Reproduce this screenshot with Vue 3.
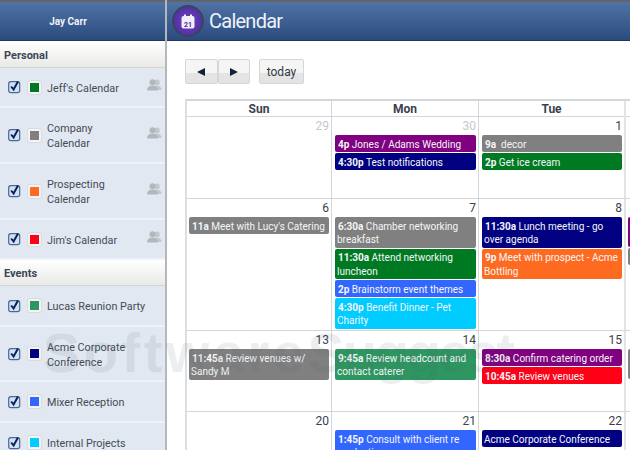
<script setup>
const groups = [
  { name: 'Personal', cls: 'personal', items: [
    { label: "Jeff's Calendar", color: '#007a22', shared: true, cls: 'single' },
    { label: 'Company Calendar', color: '#808080', shared: true, cls: 'double' },
    { label: 'Prospecting Calendar', color: '#ff6a21', shared: true, cls: 'double' },
    { label: "Jim's Calendar", color: '#ff0016', shared: true, cls: 'single' },
  ]},
  { name: 'Events', cls: 'events', items: [
    { label: 'Lucas Reunion Party', color: '#2e9761', cls: 'single' },
    { label: 'Acme Corporate Conference', color: '#000080', cls: 'double' },
    { label: 'Mixer Reception', color: '#3366ff', cls: 'single' },
    { label: 'Internal Projects', color: '#00ccff', cls: 'single' },
  ]},
]
const days = ['Sun', 'Mon', 'Tue', 'Wed']
const weeks = [
  { h: 'w1', cells: [
    { n: 29, muted: true, ev: [] },
    { n: 30, muted: true, ev: [
      { t: '4p', x: 'Jones / Adams Wedding', c: '#800080' },
      { t: '4:30p', x: 'Test notifications', c: '#000080' } ] },
    { n: 1, ev: [
      { t: '9a', x: '\u00a0decor', c: '#808080' },
      { t: '2p', x: 'Get ice cream', c: '#007a22' } ] },
    { n: '', ev: [] },
  ]},
  { h: 'w2', cells: [
    { n: 6, ev: [ { t: '11a', x: "Meet with Lucy's Catering", c: '#808080' } ] },
    { n: 7, ev: [
      { t: '6:30a', x: 'Chamber networking breakfast', c: '#808080' },
      { t: '11:30a', x: 'Attend networking luncheon', c: '#007a22' },
      { t: '2p', x: 'Brainstorm event themes', c: '#3366ff' },
      { t: '4:30p', x: 'Benefit Dinner - Pet Charity', c: '#00ccff' } ] },
    { n: 8, ev: [
      { t: '11:30a', x: 'Lunch meeting - go over agenda', c: '#000080' },
      { t: '9p', x: 'Meet with prospect - Acme Bottling', c: '#ff6a21' } ] },
    { n: '', ev: [
      { cls: 'h30', c: '#800080' }, { cls: 'h17', c: '#808080' } ] },
  ]},
  { h: 'w3', cells: [
    { n: 13, ev: [ { t: '11:45a', x: 'Review venues w/ Sandy M', c: '#808080' } ] },
    { n: 14, ev: [ { t: '9:45a', x: 'Review headcount and contact caterer', c: '#2e9761' } ] },
    { n: 15, ev: [
      { t: '8:30a', x: 'Confirm catering order', c: '#800080' },
      { t: '10:45a', x: 'Review venues', c: '#ff0016' } ] },
    { n: '', ev: [ { cls: 'h30', c: '#808080' } ] },
  ]},
  { h: 'w4', cells: [
    { n: 20, ev: [] },
    { n: 21, ev: [ { t: '1:45p', x: 'Consult with client re production', c: '#3366ff' } ] },
    { n: 22, ev: [ { t: '', x: 'Acme Corporate Conference', c: '#000080' } ] },
    { n: '', ev: [] },
  ]},
]
</script>

<template>
  <div class="app">
    <aside class="side">
      <div class="user">Jay Carr</div>
      <section v-for="g in groups" :key="g.name" :class="g.cls">
        <h2 class="group">{{ g.name }}</h2>
        <div v-for="i in g.items" :key="i.label" class="row" :class="i.cls">
          <span class="check">
            <svg width="16" height="16" viewBox="0 0 16 16">
              <rect x="0.700" y="2.700" width="11" height="11" rx="2.200" fill="#cfe2f7" stroke="#4a6796" stroke-width="1.200" />
              <path d="M3.200 7.500l2.400 3 4.400-8" fill="none" stroke="#10224f" stroke-width="2" />
            </svg>
          </span>
          <span class="swatch"><i :style="{ background: i.color }"></i></span>
          <span class="label">{{ i.label }}</span>
          <svg v-if="i.shared" class="people" width="15" height="12" viewBox="0 0 15 12">
            <circle cx="10" cy="3.200" r="2.800" fill="#c4c7cc" />
            <path d="M6 11c0-3 1.500-4.500 4-4.500s4.500 1.500 4.500 4.500z" fill="#c4c7cc" />
            <circle cx="5.500" cy="3.200" r="3" fill="#b4b7bc" />
            <path d="M0 11.500c0-3.300 2-5 5.500-5s5.500 1.700 5.500 5z" fill="#b4b7bc" />
          </svg>
        </div>
      </section>
    </aside>

    <main class="main">
      <header class="top">
        <span class="logo">
          <svg width="14" height="15" viewBox="0 0 14 15">
            <rect x="0.500" y="2" width="13" height="12.500" rx="2" fill="#f2eefb" />
            <rect x="3" y="0.500" width="2" height="3.500" fill="#f2eefb" />
            <rect x="9" y="0.500" width="2" height="3.500" fill="#f2eefb" />
            <text x="7" y="12.500" text-anchor="middle" class="logo-num">21</text>
          </svg>
        </span>
        <h1 class="title">Calendar</h1>
      </header>

      <div class="content">
        <div class="toolbar">
          <div class="pair">
            <button class="btn arrow"><svg width="10" height="10" viewBox="0 0 10 10"><path d="M9 1v8L1 5z" fill="#10203f" /></svg></button>
            <button class="btn arrow"><svg width="10" height="10" viewBox="0 0 10 10"><path d="M1 1v8l8-4z" fill="#10203f" /></svg></button>
          </div>
          <button class="btn today">today</button>
        </div>

        <div class="cal">
          <div class="head">
            <div v-for="d in days" :key="d" class="hcell">{{ d === 'Wed' ? '' : d }}</div>
          </div>
          <div v-for="w in weeks" :key="w.h" class="week" :class="w.h">
            <div v-for="(c, ci) in w.cells" :key="ci" class="cell">
              <div class="num" :class="{ muted: c.muted }">{{ c.n || '\u00a0' }}</div>
              <div v-for="(e, ei) in c.ev" :key="ei" class="ev" :class="e.cls" :style="{ background: e.c }"><b v-if="e.t">{{ e.t }}</b> {{ e.x }}</div>
            </div>
          </div>
        </div>
      </div>
    </main>

    <div class="mark"><span class="m1">Software</span><span class="m2">Suggest</span><span class="m3">.com</span></div>
  </div>
</template>

<style>
html, body { margin: 0; padding: 0; overflow: hidden; background: #fff; }
</style>

<style scoped>
.app {
  position: relative;
  display: flex;
  width: 630px;
  height: 450px;
  overflow: hidden;
  font-family: Roboto, "Liberation Sans", sans-serif;
  color: #333a45;
}
.side {
  flex: none;
  width: 165px;
  height: 450px;
  overflow: hidden;
  background: #e2e8f1;
  border-right: 2px solid #b4b8bd;
}
.user {
  height: 38px;
  border-top: 2px solid #60646b;
  border-bottom: 1px solid #1f3559;
  display: flex;
  align-items: center;
  justify-content: center;
  padding-right: 29px;
  font-size: 10px;
  font-weight: 700;
  color: #eef2f7;
  background: linear-gradient(#5072a4, #3f6194 45%, #2a4b7c);
}
.group {
  margin: 0;
  height: 26px;
  display: flex;
  align-items: center;
  padding: 2px 0 0 4px;
  font-size: 11px;
  font-weight: 700;
  color: #3c4656;
  background: linear-gradient(#ffffff, #e9e9e6);
  border-bottom: 1px solid #d3d6d8;
  box-sizing: border-box;
}
.personal .group { height: 27px; }
.row {
  display: flex;
  align-items: center;
  padding-left: 8px;
  box-sizing: border-box;
  border-bottom: 2px solid #eef1f6;
}
.single { height: 40px; }
.double { height: 56px; }
.events .single { height: 41px; }
.events .double { height: 55px; }
.check { width: 16px; height: 16px; display: flex; flex: none; }
.swatch {
  flex: none;
  margin-left: 4px;
  width: 13px;
  height: 13px;
  padding: 2px;
  box-sizing: border-box;
  background: #f3f4f5;
  border-radius: 2px;
  box-shadow: 0 0 0 1px #d9dce0;
  display: flex;
}
.swatch i { display: block; flex: 1; }
.label {
  margin: 2px 0 0 6px;
  width: 80px;
  font-size: 10.800px;
  line-height: 15px;
  color: #444b56;
  flex: none;
}
.events .label { width: 112px; }
.people { margin-left: 20px; margin-top: -4px; flex: none; }
.main { flex: 1; min-width: 0; display: flex; flex-direction: column; }
.top {
  flex: none;
  height: 38px;
  border-top: 2px solid #60646b;
  border-bottom: 1px solid #1f3559;
  display: flex;
  align-items: center;
  gap: 5px;
  padding-left: 5px;
  background: linear-gradient(#5072a4, #3f6194 45%, #2a4b7c);
}
.logo {
  width: 28px;
  height: 28px;
  border-radius: 50%;
  background: radial-gradient(circle, #6a44b8, #4a2a9c);
  border: 2px solid #3a4560;
  display: flex;
  align-items: center;
  justify-content: center;
  flex: none;
}
.logo-num { font-size: 7px; font-weight: 700; fill: #4a2a9c; font-family: Roboto, sans-serif; }
.title {
  margin: 0;
  font-size: 20px;
  font-weight: 400;
  color: #eef3f9;
  letter-spacing: -0.750px;
}
.content { padding: 18px 0 0 18px; overflow: hidden; }
.toolbar { display: flex; gap: 9px; height: 25px; }
.pair { display: flex; }
.btn {
  padding: 0;
  height: 25px;
  border: 1px solid #d4d7d8;
  border-radius: 2px;
  background: linear-gradient(#f5f6f4 55%, #e3e4e3 55%);
  font-family: inherit;
  display: flex;
  align-items: center;
  justify-content: center;
}
.arrow { width: 32.500px; }
.today { width: 45px; font-size: 12px; color: #333a45; }
.cal {
  margin-top: 15px;
  width: 480px;
  border-top: 2px solid #d4d7da;
  border-left: 2px solid #dcdfe2;
  box-sizing: border-box;
}
.head, .week {
  display: grid;
  grid-template-columns: 145px 147px 147px 39px;
  box-sizing: border-box;
  border-bottom: 1px solid #d4d7da;
}
.head { height: 16px; }
.hcell {
  text-align: center;
  font-size: 12px;
  font-weight: 700;
  line-height: 17px;
  color: #3a414c;
  border-right: 1px solid #d4d7da;
}
.hcell:nth-child(3) { border-right: 2px solid #e2e4e6; }
.week.w1 { height: 82px; }
.week.w2 { height: 132px; }
.week.w3 { height: 81px; }
.week.w4 { height: 60px; }
.cell { border-right: 1px solid #d4d7da; padding: 0 2px 0 3px; min-width: 0; }
.cell:first-child { padding-left: 2px; }
.cell:nth-child(3) { border-right: 2px solid #e2e4e6; }
.cell:last-child { border-right: 0; padding-left: 2px; }
.num {
  text-align: right;
  font-size: 12px;
  line-height: 18px;
  color: #3a414c;
}
.num.muted { color: #c5c8cc; }
.ev {
  margin-bottom: 1px;
  padding: 2.500px 2px 1px;
  border-radius: 2px;
  font-size: 10px;
  line-height: 13.500px;
  min-height: 13.500px;
  color: #f4f6f8;
}
.ev.h30 { height: 30px; box-sizing: border-box; }
.ev.h17 { height: 17px; box-sizing: border-box; }
.ev b { font-weight: 700; margin-left: 1px; }
.mark {
  position: absolute;
  left: 43px;
  top: 322px;
  font-family: "Liberation Sans", sans-serif;
  font-size: 56px;
  font-weight: 700;
  line-height: 62px;
  white-space: nowrap;
  color: rgba(70, 85, 110, 0.1);
  pointer-events: none;
}
.m1 { letter-spacing: 3.500px; }
.m2 { letter-spacing: -2.200px; }
.m3 { font-size: 24px; letter-spacing: 0; }
</style>
